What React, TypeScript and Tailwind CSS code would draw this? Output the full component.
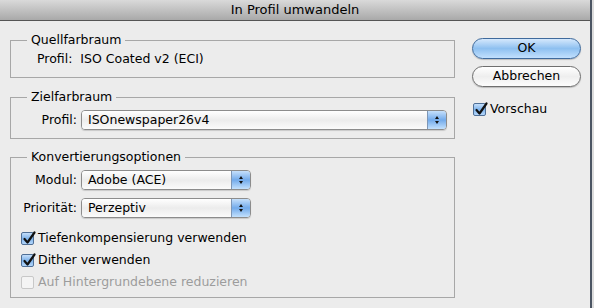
import React from 'react'

const font = "font-['DejaVu_Sans',sans-serif]"

function Check({ checked, disabled }: { checked?: boolean; disabled?: boolean }) {
    if (disabled) {
        return <span className="block w-[13px] h-[13px] rounded-[2px] border border-[#c8c8c8] bg-[#f4f4f4]" />
    }
    return (
        <span className="relative block w-[13px] h-[13px] rounded-[2px] border border-[#4f6f96] bg-gradient-to-b from-[#c4defa] via-[#7fb3ea] to-[#b3d6fb]">
            {checked && (
                <svg className="absolute -left-[1px] -top-[3px]" width="16" height="16" viewBox="0 0 16 16">
                    <path d="M3.5 9 L6.5 12.5 L13.5 2.5" fill="none" stroke="#111" strokeWidth="2.2" strokeLinecap="round" strokeLinejoin="round" />
                </svg>
            )}
        </span>
    )
}

function PopUp({ value, width }: { value: string; width: string }) {
    return (
        <div className={`${width} h-[20px] flex rounded-[4px] border border-[#8c8c8c] overflow-hidden shadow-[0_1px_1px_rgba(0,0,0,0.15)]`}>
            <div className="flex-1 flex items-center pl-[6px] text-[12.5px] leading-none text-black bg-gradient-to-b from-white via-[#ececec] to-[#fbfbfb]">
                {value}
            </div>
            <div className="w-[19px] flex flex-col items-center justify-center gap-[2px] border-l border-[#7d96b6] bg-gradient-to-b from-[#c6e0fb] via-[#72aaea] to-[#c3e1fd]">
                <span className="block w-0 h-0 border-l-[2.5px] border-r-[2.5px] border-b-[3px] border-l-transparent border-r-transparent border-b-[#111]" />
                <span className="block w-0 h-0 border-l-[2.5px] border-r-[2.5px] border-t-[3px] border-l-transparent border-r-transparent border-t-[#111]" />
            </div>
        </div>
    )
}

function Box({ title, className, children }: { title: string; className: string; children: React.ReactNode }) {
    return (
        <fieldset className={`border border-[#a7a7a7] ${className}`}>
            <legend className="ml-[16px] px-[4px] text-[12.5px] leading-[16px] text-black">{title}</legend>
            {children}
        </fieldset>
    )
}

export default function App() {
    return (
        <div className={`w-[594px] h-[308px] flex bg-[#dcdcdc] ${font}`}>
            <div className="w-[592px] h-full border-r-2 border-[#4b5563] bg-[#ececec] flex flex-col">
                {/* title bar */}
                <div className="h-[21px] border-b border-[#555] bg-gradient-to-b from-[#dadada] to-[#a9a9a9] flex items-center justify-center text-[13px] text-black">
                    In Profil umwandeln
                </div>

                <div className="flex">
                    <div className="w-[455px] pl-[10px]">
                        <Box title="Quellfarbraum" className="mt-[11px] h-[46px]">
                            <div className="pt-[3px] pl-[26px] text-[12.5px] leading-[16px] text-black">
                                Profil:&nbsp;&nbsp;ISO Coated v2 (ECI)
                            </div>
                        </Box>

                        <Box title="Zielfarbraum" className="mt-[11px] h-[50px]">
                            <div className="pt-[5px] pl-[6px] flex items-center gap-[4px]">
                                <span className="w-[60px] text-right text-[12.5px]">Profil:</span>
                                <PopUp value="ISOnewspaper26v4" width="w-[366px]" />
                            </div>
                        </Box>

                        <Box title="Konvertierungsoptionen" className="mt-[10px] h-[149px]">
                            <div className="pt-[5px] pl-[6px] flex flex-col gap-[8px]">
                                <div className="flex items-center gap-[4px]">
                                    <span className="w-[60px] text-right text-[12.5px]">Modul:</span>
                                    <PopUp value="Adobe (ACE)" width="w-[170px]" />
                                </div>
                                <div className="flex items-center gap-[4px]">
                                    <span className="w-[60px] text-right text-[12.5px] whitespace-nowrap">Priorität:</span>
                                    <PopUp value="Perzeptiv" width="w-[170px]" />
                                </div>
                            </div>
                            <div className="mt-[9px] pl-[10px] flex flex-col text-[12.5px]">
                                <label className="h-[22px] flex items-center gap-[4px]">
                                    <Check checked /> Tiefenkompensierung verwenden
                                </label>
                                <label className="h-[22px] flex items-center gap-[4px]">
                                    <Check checked /> Dither verwenden
                                </label>
                                <label className="h-[22px] flex items-center gap-[4px] text-[#9c9c9c]">
                                    <Check disabled /> Auf Hintergrundebene reduzieren
                                </label>
                            </div>
                        </Box>
                    </div>

                    <div className="ml-[17px] w-[109px] pt-[17px] flex flex-col">
                        <button className="h-[21px] rounded-full border border-[#3f6a9c] bg-gradient-to-b from-[#d5e8fc] via-[#8ec0f0] to-[#c2e0fd] text-[12.5px] text-black shadow-[0_1px_1px_rgba(0,0,0,0.2)]">
                            OK
                        </button>
                        <button className="mt-[7px] h-[21px] rounded-full border border-[#6f6f6f] bg-gradient-to-b from-white via-[#eeeeee] to-[#fdfdfd] text-[12.5px] text-black shadow-[0_1px_1px_rgba(0,0,0,0.2)]">
                            Abbrechen
                        </button>
                        <label className="mt-[13px] pl-[1px] flex items-center gap-[4px] text-[12.5px] text-black">
                            <Check checked /> Vorschau
                        </label>
                    </div>
                </div>
            </div>
        </div>
    )
}
